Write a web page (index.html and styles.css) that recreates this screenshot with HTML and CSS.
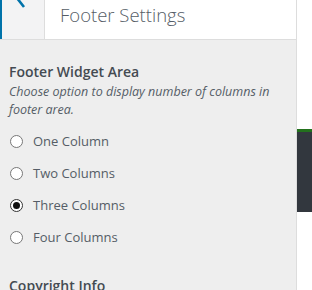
FILE: index.html
```html
<!DOCTYPE html>
<html>
<head>
<meta charset="utf-8">
<link rel="stylesheet" href="styles.css">
</head>
<body>
<div class="page">
  <div class="sidebar">
    <div class="header">
      <div class="back">
        <svg class="chev" width="42" height="10" viewBox="0 0 42 10"><path d="M22 -7 L16.5 0 L22 7" fill="none" stroke="#0073aa" stroke-width="2.6"/></svg>
      </div>
      <div class="title">Footer Settings</div>
    </div>
    <div class="content">
      <div class="control">
        <div class="ctitle">Footer Widget Area</div>
        <div class="desc">Choose option to display number of columns in footer area.</div>
        <label class="opt"><span class="radio"></span><span>One Column</span></label>
        <label class="opt"><span class="radio"></span><span>Two Columns</span></label>
        <label class="opt"><span class="radio checked"></span><span>Three Columns</span></label>
        <label class="opt"><span class="radio"></span><span>Four Columns</span></label>
      </div>
      <div class="ctitle next">Copyright Info</div>
    </div>
  </div>
  <div class="preview">
    <div class="dark"></div>
  </div>
</div>
</body>
</html>
```
FILE: styles.css
```css
html, body { margin: 0; padding: 0; }
body { font-family: "Open Sans", "Liberation Sans", sans-serif; background: #fff; overflow: hidden; }
.page { display: flex; height: 290px; }
.sidebar { width: 296px; border-right: 1px solid #ddd; background: #eee; flex: none; }
.header { display: flex; height: 39px; background: #fff; border-bottom: 1px solid #ddd; }
.back { width: 42px; background: #f3f3f4; border-left: 2px solid #0073aa; border-right: 1px solid #ddd; flex: none; }
.chev { display: block; }
.title { padding-left: 15px; font-size: 18.5px; font-weight: 300; color: #555d66; line-height: 28px; margin-top: 1px; }
.content { padding: 22px 9px 0 9px; color: #555d66; }
.ctitle { font-size: 14px; font-weight: 600; line-height: 20px; color: #444b52; }
.desc { font-size: 12.5px; font-style: italic; line-height: 18px; margin-top: 1px; color: #555d66; }
.opt { display: flex; align-items: center; height: 32px; font-size: 13px; color: #555d66; }
.control .desc { margin-bottom: 6px; }
.radio { width: 11px; height: 11px; border: 1px solid #777; border-radius: 50%; background: #fff; margin: 0 10px 0 1px; flex: none; display: flex; align-items: center; justify-content: center; }
.radio.checked { border-color: #333; }
.radio.checked::after { content: ""; width: 7px; height: 7px; border-radius: 50%; background: #111; }
.next { margin-top: 23px; }
.preview { flex: 1; padding-top: 129px; }
.dark { height: 80px; background: #32373e; border-top: 3px solid #23711d; }
```
